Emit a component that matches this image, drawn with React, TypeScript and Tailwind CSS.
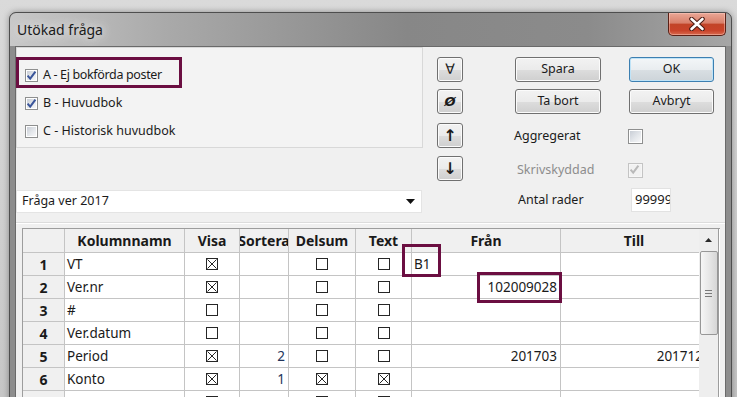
import clsx from "clsx";

type Row = {
  n: number;
  name: string;
  visa: boolean;
  sort?: string;
  delsum?: boolean;
  text?: boolean;
  fran?: string;
  franLeft?: boolean;
  till?: string;
};

const ROWS: Row[] = [
  { n: 1, name: "VT", visa: true, fran: "B1", franLeft: true },
  { n: 2, name: "Ver.nr", visa: true, fran: "102009028" },
  { n: 3, name: "#", visa: false },
  { n: 4, name: "Ver.datum", visa: false },
  { n: 5, name: "Period", visa: true, sort: "2", fran: "201703", till: "201712" },
  { n: 6, name: "Konto", visa: true, sort: "1", delsum: true, text: true },
  { n: 7, name: "Löpnr", visa: true },
];

const HEADERS = ["", "Kolumnnamn", "Visa", "Sortera", "Delsum", "Text", "Från", "Till"];

const SOURCES: [string, boolean, string][] = [
  ["A - Ej bokförda poster", true, "tracking-[-0.35px]"],
  ["B - Huvudbok", true, ""],
  ["C - Historisk huvudbok", false, ""],
];

// Windows 7 style checkbox used in the dialog part
function WinCheck({
  checked,
  disabled,
  big,
}: {
  checked?: boolean;
  disabled?: boolean;
  big?: boolean;
}) {
  return (
    <span
      className={clsx(
        "relative inline-flex shrink-0 border",
        big ? "h-[15px] w-[15px]" : "h-[13px] w-[13px]",
        disabled ? "border-[#c4c4c4] bg-[#f6f6f6]" : "border-[#8e8f8f] bg-white",
      )}
    >
      <span
        className={clsx(
          "absolute inset-[1px]",
          disabled
            ? "bg-[#f1f1f1]"
            : "bg-[linear-gradient(135deg,#c9ced6_0%,#e4e7eb_55%,#f7f7f8_100%)]",
        )}
      />
      {checked && (
        <svg
          viewBox="0 0 13 13"
          className="absolute left-[-1px] top-[-1px] h-[13px] w-[13px]"
        >
          <path
            d="M2.6 6.6 L5.2 9.6 L10.4 2.6"
            fill="none"
            stroke={disabled ? "#b9b9b9" : "#3a559a"}
            strokeWidth="2"
          />
        </svg>
      )}
    </span>
  );
}

// flat checkbox inside the grid cells
function CellCheck({ checked }: { checked?: boolean }) {
  return (
    <svg viewBox="0 0 12 12" className="h-[12px] w-[12px]">
      <rect x="0.5" y="0.5" width="11" height="11" fill="#fff" stroke="#262626" />
      {checked && (
        <path d="M1.5 1.5 L10.5 10.5 M10.5 1.5 L1.5 10.5" stroke="#262626" strokeWidth="1" />
      )}
    </svg>
  );
}

function WinButton({
  children,
  primary,
  className,
}: {
  children: React.ReactNode;
  primary?: boolean;
  className?: string;
}) {
  return (
    <button
      type="button"
      className={clsx(
        "flex h-[25px] items-center justify-center rounded-[3px] border text-[12.5px] text-[#1b1b1b]",
        primary
          ? "border-[#3c7fb1] bg-[linear-gradient(to_bottom,#f3f6f8_0%,#e9edf0_50%,#d9dfe3_51%,#cdd4d9_100%)] shadow-[inset_0_0_0_1px_#bfe3f7]"
          : "border-[#707070] bg-[linear-gradient(to_bottom,#f2f2f2_0%,#ebebeb_50%,#dddddd_51%,#cfcfcf_100%)] shadow-[inset_0_0_0_1px_#fbfbfb]",
        className,
      )}
    >
      {children}
    </button>
  );
}

function ArrowButton({ children, className }: { children: React.ReactNode; className?: string }) {
  return (
    <WinButton className={clsx("w-[26px] font-['DejaVu_Sans',sans-serif] font-bold", className)}>
      {children}
    </WinButton>
  );
}

function TitleBar() {
  return (
    <div className="flex h-[33px] shrink-0 items-start justify-between rounded-t-[6px] bg-[linear-gradient(to_right,#c8c8c8_0%,#a9a9a9_22%,#878787_55%,#8b8b8b_80%,#a6a6a6_100%)]">
      <span className="pl-[7px] pt-[9px] text-[14px] leading-[16px] text-[#1a1a1a] [text-shadow:0_0_8px_#e6e6e6,0_0_12px_#e6e6e6]">
        Utökad fråga
      </span>
      <div className="mr-[5px] flex h-[23px] w-[58px] items-center justify-center rounded-b-[5px] border border-t-0 border-[#5b2016] bg-[linear-gradient(to_bottom,#eaa796_0%,#d9806b_45%,#c24428_52%,#c9432a_80%,#d86a4f_100%)] shadow-[inset_0_0_0_1px_rgba(255,210,200,0.45)]">
        <svg viewBox="0 0 18 14" className="h-[14px] w-[18px]">
          <path d="M3.5 2 L14.5 12 M14.5 2 L3.5 12" stroke="#4a1c14" strokeWidth="4.6" strokeLinecap="round" />
          <path d="M3.5 2 L14.5 12 M14.5 2 L3.5 12" stroke="#fff" strokeWidth="2.6" strokeLinecap="round" />
        </svg>
      </div>
    </div>
  );
}

function TopSection() {
  return (
    <div className="flex h-[175px] shrink-0 items-start">
      <div className="w-[407px]">
        <div className="h-[101px] border border-[#d8d8d8] bg-[#f3f3f3] pl-[8px] pt-[13px] text-[12.5px] text-[#1b1b1b]">
          {SOURCES.map(([label, checked, extra]) => (
            <div key={label} className="flex h-[28px] items-center gap-[5px]">
              <WinCheck checked={checked} />
              <span className={extra}>{label}</span>
            </div>
          ))}
        </div>
        <div className="mt-[42px] flex h-[23px] w-[406px] items-center justify-between border border-[#e4e4e4] bg-white pl-[5px] pr-[6px] text-[12.5px] text-[#1b1b1b]">
          <span>Fråga ver 2017</span>
          <svg viewBox="0 0 9 5" className="h-[5px] w-[9px]">
            <polygon points="0,0 9,0 4.5,5" fill="#111" />
          </svg>
        </div>
      </div>

      <div className="ml-[14px] flex w-[26px] flex-col pt-[10px]">
        <ArrowButton className="text-[14px] font-normal">∀</ArrowButton>
        <ArrowButton className="mt-[7px] text-[13px] italic">Ø</ArrowButton>
        <ArrowButton className="mt-[9px] text-[16px]">↑</ArrowButton>
        <ArrowButton className="mt-[8px] text-[16px]">↓</ArrowButton>
      </div>

      <div className="ml-[52px] w-[199px] pt-[10px] text-[12.5px] text-[#1b1b1b]">
        <div className="flex gap-[28px]">
          <WinButton className="w-[86px]">Spara</WinButton>
          <WinButton primary className="w-[85px]">
            OK
          </WinButton>
        </div>
        <div className="mt-[7px] flex gap-[28px]">
          <WinButton className="w-[86px]">Ta bort</WinButton>
          <WinButton className="w-[85px]">Avbryt</WinButton>
        </div>
        <div className="mt-[12px] flex h-[20px] items-center">
          <span className="w-[113px] -ml-[1px]">Aggregerat</span>
          <span className="ml-[1px] flex">
            <WinCheck big />
          </span>
        </div>
        <div className="mt-[14px] flex h-[20px] items-center">
          <span className="w-[113px] pl-[2px] text-[#8d8d8d]">Skrivskyddad</span>
          <WinCheck big checked disabled />
        </div>
        <div className="mt-[8px] flex h-[24px] items-center">
          <span className="w-[116px] pl-[3px]">Antal rader</span>
          <div className="flex h-[24px] w-[40px] items-center overflow-hidden whitespace-nowrap border border-[#e2e2e2] bg-white pl-[3px] text-[13px]">
            99999
          </div>
        </div>
      </div>
    </div>
  );
}

function Grid() {
  const cell = "flex items-center overflow-hidden whitespace-nowrap border-b border-r border-[#c4c4c4]";
  return (
    <div className="flex w-[698px] border-l border-t border-[#9d9d9d] bg-white">
      <div className="w-[676px] overflow-hidden">
        <div className="grid w-[685px] grid-cols-[42px_120px_55px_49px_67px_56px_149px_147px] text-[13.5px] text-[#1a1a1a]">
          {HEADERS.map((h, i) => (
            <div
              key={i}
              className={clsx(cell, "h-[24px] justify-center bg-[#f0f0f0] text-[14px] font-bold")}
            >
              {h}
            </div>
          ))}
          {ROWS.map((r) => (
            <div key={r.n} className="contents">
              <div className={clsx(cell, "h-[23px] justify-center bg-[#f0f0f0] text-[14px] font-bold")}>
                {r.n}
              </div>
              <div className={clsx(cell, "h-[23px] pl-[2px]")}>{r.name}</div>
              <div className={clsx(cell, "h-[23px] justify-center")}>
                <CellCheck checked={r.visa} />
              </div>
              <div className={clsx(cell, "h-[23px] justify-end pr-[3px] text-[#22345a]")}>{r.sort}</div>
              <div className={clsx(cell, "h-[23px] justify-center")}>
                <CellCheck checked={r.delsum} />
              </div>
              <div className={clsx(cell, "h-[23px] justify-center")}>
                <CellCheck checked={r.text} />
              </div>
              <div
                className={clsx(
                  cell,
                  "h-[23px]",
                  r.franLeft ? "justify-start pl-[2px]" : "justify-end pr-[3px]",
                )}
              >
                {r.fran}
              </div>
              <div className={clsx(cell, "h-[23px] justify-end pr-[4px]")}>{r.till}</div>
            </div>
          ))}
        </div>
      </div>

      <div className="flex w-[20px] flex-col items-center border-r border-[#9d9d9d] bg-[#eeeeee]">
        <div className="flex h-[22px] w-full items-center justify-center">
          <svg viewBox="0 0 7 4" className="h-[4px] w-[7px]">
            <polygon points="0,4 7,4 3.5,0" fill="#2a2a2a" />
          </svg>
        </div>
        <div className="flex h-[84px] w-[18px] flex-col items-center justify-center gap-[2px] rounded-[2px] border border-[#979797] bg-[linear-gradient(to_right,#f6f6f6,#e4e4e4_60%,#d6d6d6)]">
          <span className="h-[1px] w-[7px] bg-[#7a7a7a]" />
          <span className="h-[1px] w-[7px] bg-[#7a7a7a]" />
          <span className="h-[1px] w-[7px] bg-[#7a7a7a]" />
        </div>
      </div>
    </div>
  );
}

export default function App() {
  return (
    <div className="relative h-[397px] w-[737px] overflow-hidden bg-[linear-gradient(to_bottom,#dadada,#c6c6c6)] font-['Noto_Sans',sans-serif]">
      <div className="ml-[9px] mt-[12px] flex h-[400px] w-[723px] flex-col overflow-hidden rounded-t-[7px] border border-[#4e4e4e] bg-[#8d8d8d] shadow-[0_0_6px_rgba(0,0,0,0.35)]">
        <TitleBar />
        <div className="mx-[5px] flex-1 border border-[#6a6a6a] bg-[#f0f0f0]">
          <TopSection />
          <div className="border-t border-[#dcdcdc] pl-[6px] pt-[5px] shadow-[inset_0_1px_0_#ffffff]">
            <Grid />
          </div>
        </div>
      </div>

      {/* highlight frames drawn over the dialog */}
      <div className="absolute left-[16px] top-[57px] h-[31px] w-[166px] border-[3px] border-[#6b0e41]" />
      <div className="absolute left-[402px] top-[244px] h-[33px] w-[39px] border-[3px] border-[#6b0e41]" />
      <div className="absolute left-[477px] top-[272px] h-[31px] w-[85px] border-[3px] border-[#6b0e41]" />
    </div>
  );
}
